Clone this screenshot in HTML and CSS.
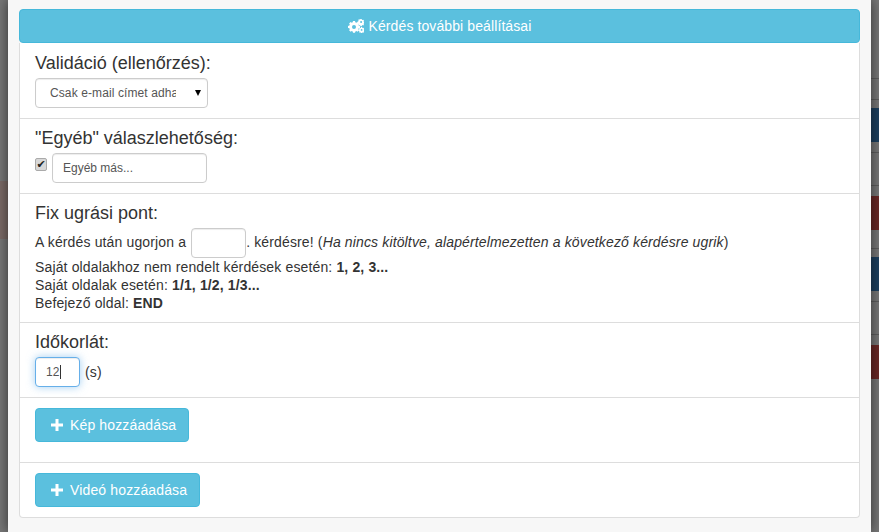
FILE: index.html
```html
<!DOCTYPE html>
<html lang="hu">
<head>
    <meta charset="UTF-8">
    <meta name="viewport" content="width=device-width, initial-scale=1.0">
    <title>Kérdés további beállításai</title>
    <link rel="stylesheet" href="styles.css">
</head>
<body>
    <div class="strip strip-left">
        <div class="strip-brown"></div>
    </div>

    <div class="modal">
        <button class="btn btn-full" type="button">
            <svg class="icon-gears" viewBox="0 0 16 14" width="16" height="14" aria-hidden="true">
                <path fill="#fff" fill-rule="evenodd" d="M5 2h2l.3 1.3 1 .4L9.500 3 11 4.500l-.7 1.100.4 1L12 6.900v2l-1.300.3-.4 1 .7 1.100L9.500 12.800l-1.100-.7-1 .4L7 13.800H5l-.3-1.300-1-.4-1.100.7L1.100 11.300l.7-1.100-.4-1L0 8.900v-2l1.400-.3.4-1L1.100 4.500 2.600 3l1.100.7 1-.4zM6 5.900a2 2 0 1 0 0 4 2 2 0 0 0 0-4z"/>
                <path fill="#fff" fill-rule="evenodd" d="M12.500 0h1.200l.2.800.6.300.7-.4.800.8-.4.700.2.600.8.200v1.200l-.8.200-.2.600.4.700-.8.800-.7-.4-.6.300-.2.800h-1.200l-.2-.8-.6-.3-.7.400-.8-.8.400-.7-.2-.6-.8-.2V2.500l.8-.2.2-.6-.4-.7.800-.8.700.4.600-.3zM13.100 2.100a1 1 0 1 0 0 2 1 1 0 0 0 0-2z"/>
                <path fill="#fff" fill-rule="evenodd" d="M13.100 8.100h1l.2.700.5.200.6-.3.700.7-.3.600.2.500.7.200v1l-.7.200-.2.500.3.600-.7.700-.6-.3-.5.200-.2.700h-1l-.2-.7-.5-.2-.6.300-.7-.7.300-.6-.2-.5-.7-.2v-1l.7-.2.200-.5-.3-.6.700-.7.600.3.500-.2zM13.600 10a.9.900 0 1 0 0 1.800.9.900 0 0 0 0-1.800z"/>
            </svg>
            Kérdés további beállításai
        </button>

        <div class="panel">
            <div class="section section-validation">
                <h4>Validáció (ellenőrzés):</h4>
                <div class="select-wrap">
                    <select class="field field-select">
                        <option>Csak e-mail címet adhat meg</option>
                    </select>
                </div>
            </div>

            <div class="section section-other">
                <h4>"Egyéb" válaszlehetőség:</h4>
                <div class="other-row">
                    <input class="other-check" type="checkbox" checked>
                    <input class="field field-other" type="text" value="Egyéb más...">
                </div>
            </div>

            <div class="section section-jump">
                <h4 class="title-jump">Fix ugrási pont:</h4>
                <p class="jump-line">
                    A kérdés után ugorjon a
                    <input class="field field-jump" type="text">. kérdésre! (<em>Ha nincs kitöltve, alapértelmezetten a következő kérdésre ugrik</em>)
                </p>
                <p class="jump-help">Saját oldalakhoz nem rendelt kérdések esetén: <b>1, 2, 3...</b></p>
                <p class="jump-help">Saját oldalak esetén: <b>1/1, 1/2, 1/3...</b></p>
                <p class="jump-help">Befejező oldal: <b>END</b></p>
            </div>

            <div class="section section-limit">
                <h4>Időkorlát:</h4>
                <div class="limit-row">
                    <span class="field field-limit">12<span class="caret"></span></span>
                    <span>(s)</span>
                </div>
            </div>

            <div class="section section-image">
                <button class="btn btn-add" type="button">
                    <svg class="icon-plus" viewBox="0 0 12 12" width="12" height="12" aria-hidden="true">
                        <path fill="#fff" d="M4.500 0h3v4.500H12v3H7.500V12h-3V7.500H0v-3h4.500z"/>
                    </svg>
                    Kép hozzáadása
                </button>
            </div>

            <div class="section section-video">
                <button class="btn btn-add" type="button">
                    <svg class="icon-plus" viewBox="0 0 12 12" width="12" height="12" aria-hidden="true">
                        <path fill="#fff" d="M4.500 0h3v4.500H12v3H7.500V12h-3V7.500H0v-3h4.500z"/>
                    </svg>
                    Videó hozzáadása
                </button>
            </div>
        </div>
    </div>

    <div class="strip strip-right">
        <div class="line line-1"></div>
        <div class="line line-2"></div>
        <div class="block block-blue block-1"></div>
        <div class="line line-3"></div>
        <div class="line line-4"></div>
        <div class="block block-red block-2"></div>
        <div class="line line-5"></div>
        <div class="block block-blue block-3"></div>
        <div class="line line-6"></div>
        <div class="line line-7"></div>
        <div class="block block-red block-4"></div>
    </div>
</body>
</html>
```

FILE: styles.css
```css
html, body {
    height: 532px;
    overflow: hidden;
}

body {
    display: flex;
    margin: 0;
    background-color: #777;
    font-family: "Liberation Sans", Arial, sans-serif;
    font-size: 14px;
    line-height: 18px;
    letter-spacing: 0.14px;
    color: #333;
}

.strip {
    flex: none;
    width: 8px;
}

.strip-brown {
    height: 58px;
    margin-top: 181px;
    background-color: #7a6a66;
}

.line {
    height: 1px;
    background-color: #5d5d5d;
}

.block {
    height: 34px;
}

.block-blue {
    background-color: #1c3f5e;
}

.block-red {
    background-color: #692725;
}

.line-1 { margin-top: 78px; }
.line-2 { margin-top: 20px; }
.block-1 { margin-top: 8px; }
.line-3 { margin-top: 10px; }
.line-4 { margin-top: 32px; }
.block-2 { margin-top: 10px; }
.line-5 { margin-top: 18px; }
.block-3 { margin-top: 8px; }
.line-6 { margin-top: 10px; }
.line-7 { margin-top: 32px; }
.block-4 { margin-top: 10px; }

.modal {
    position: relative;
    flex: 1;
    min-width: 0;
    padding: 9px 11px 0;
    background-color: #f7f7f7;
    box-shadow: 0 0 12px rgba(0, 0, 0, 0.6);
}

.btn {
    border: 1px solid #46b8da;
    border-radius: 4px;
    background-color: #5bc0de;
    color: #fff;
    font-family: inherit;
    font-size: 14px;
    line-height: 20px;
    letter-spacing: 0.14px;
    padding: 6px 12px;
}

.btn-full {
    display: flex;
    align-items: center;
    justify-content: center;
    gap: 5px;
    width: 100%;
    height: 34px;
    letter-spacing: 0.1px;
}

.btn-add {
    display: flex;
    align-items: center;
    gap: 7px;
    height: 34px;
    padding: 6px 12px 6px 15px;
}

.panel {
    box-sizing: border-box;
    height: 475px;
    padding-top: 1px;
    border: 1px solid #ddd;
    border-top: none;
    border-radius: 0 0 4px 4px;
    background-color: #fff;
}

.section {
    box-sizing: border-box;
    padding: 0 15px;
    border-bottom: 1px solid #ddd;
}

.section:last-child {
    border-bottom: none;
}

.section-validation { height: 75px; padding-top: 9px; }
.section-other { height: 75px; padding-top: 9px; }
.section-jump { height: 129px; padding-top: 9px; }
.section-limit { height: 75px; padding-top: 9px; }
.section-image { height: 65px; padding-top: 10px; }
.section-video { height: 55px; padding-top: 10px; }

h4 {
    margin: 0 0 5px;
    font-size: 18px;
    font-weight: normal;
    line-height: 20px;
    letter-spacing: 0;
}

.title-jump {
    margin-bottom: 4px;
}

p {
    margin: 0;
}

.field {
    box-sizing: border-box;
    height: 30px;
    border: 1px solid #ccc;
    border-radius: 4px;
    background-color: #fff;
    color: #555;
    font-family: inherit;
    font-size: 12px;
    box-shadow: inset 0 1px 1px rgba(0, 0, 0, 0.075);
}

.select-wrap {
    position: relative;
    width: 173px;
}

.select-wrap::after {
    content: "";
    position: absolute;
    top: 12px;
    right: 7px;
    border-style: solid;
    border-width: 6px 3.5px 0;
    border-color: #000 transparent transparent;
}

.field-select {
    display: block;
    width: 173px;
    padding: 0 31px 0 14px;
    appearance: none;
    letter-spacing: 0.1px;
}

.other-row,
.limit-row {
    display: flex;
    align-items: center;
}

.other-row {
    align-items: flex-start;
    gap: 5px;
}

.other-check {
    display: flex;
    align-items: center;
    justify-content: center;
    box-sizing: border-box;
    width: 12px;
    height: 13px;
    margin: 5px 0 0;
    border: 1px solid #aaa;
    border-radius: 2px;
    background-color: #d8d8d8;
    appearance: none;
}

.other-check::before {
    content: "\2714";
    color: #222;
    font-family: "DejaVu Sans", sans-serif;
    font-size: 11px;
    line-height: 1;
}

.field-other {
    width: 155px;
    padding: 0 10px;
}

.jump-line {
    line-height: 30px;
    white-space: nowrap;
}

.field-jump {
    width: 55px;
    vertical-align: middle;
    margin-left: 1px;
}

.limit-row {
    gap: 5px;
}

.field-limit {
    display: flex;
    align-items: center;
    width: 45px;
    padding-left: 10px;
    border-color: #66afe9;
    box-shadow: inset 0 1px 1px rgba(0, 0, 0, 0.075), 0 0 8px rgba(102, 175, 233, 0.6);
}

.caret {
    width: 1px;
    height: 14px;
    background-color: #333;
}
```
